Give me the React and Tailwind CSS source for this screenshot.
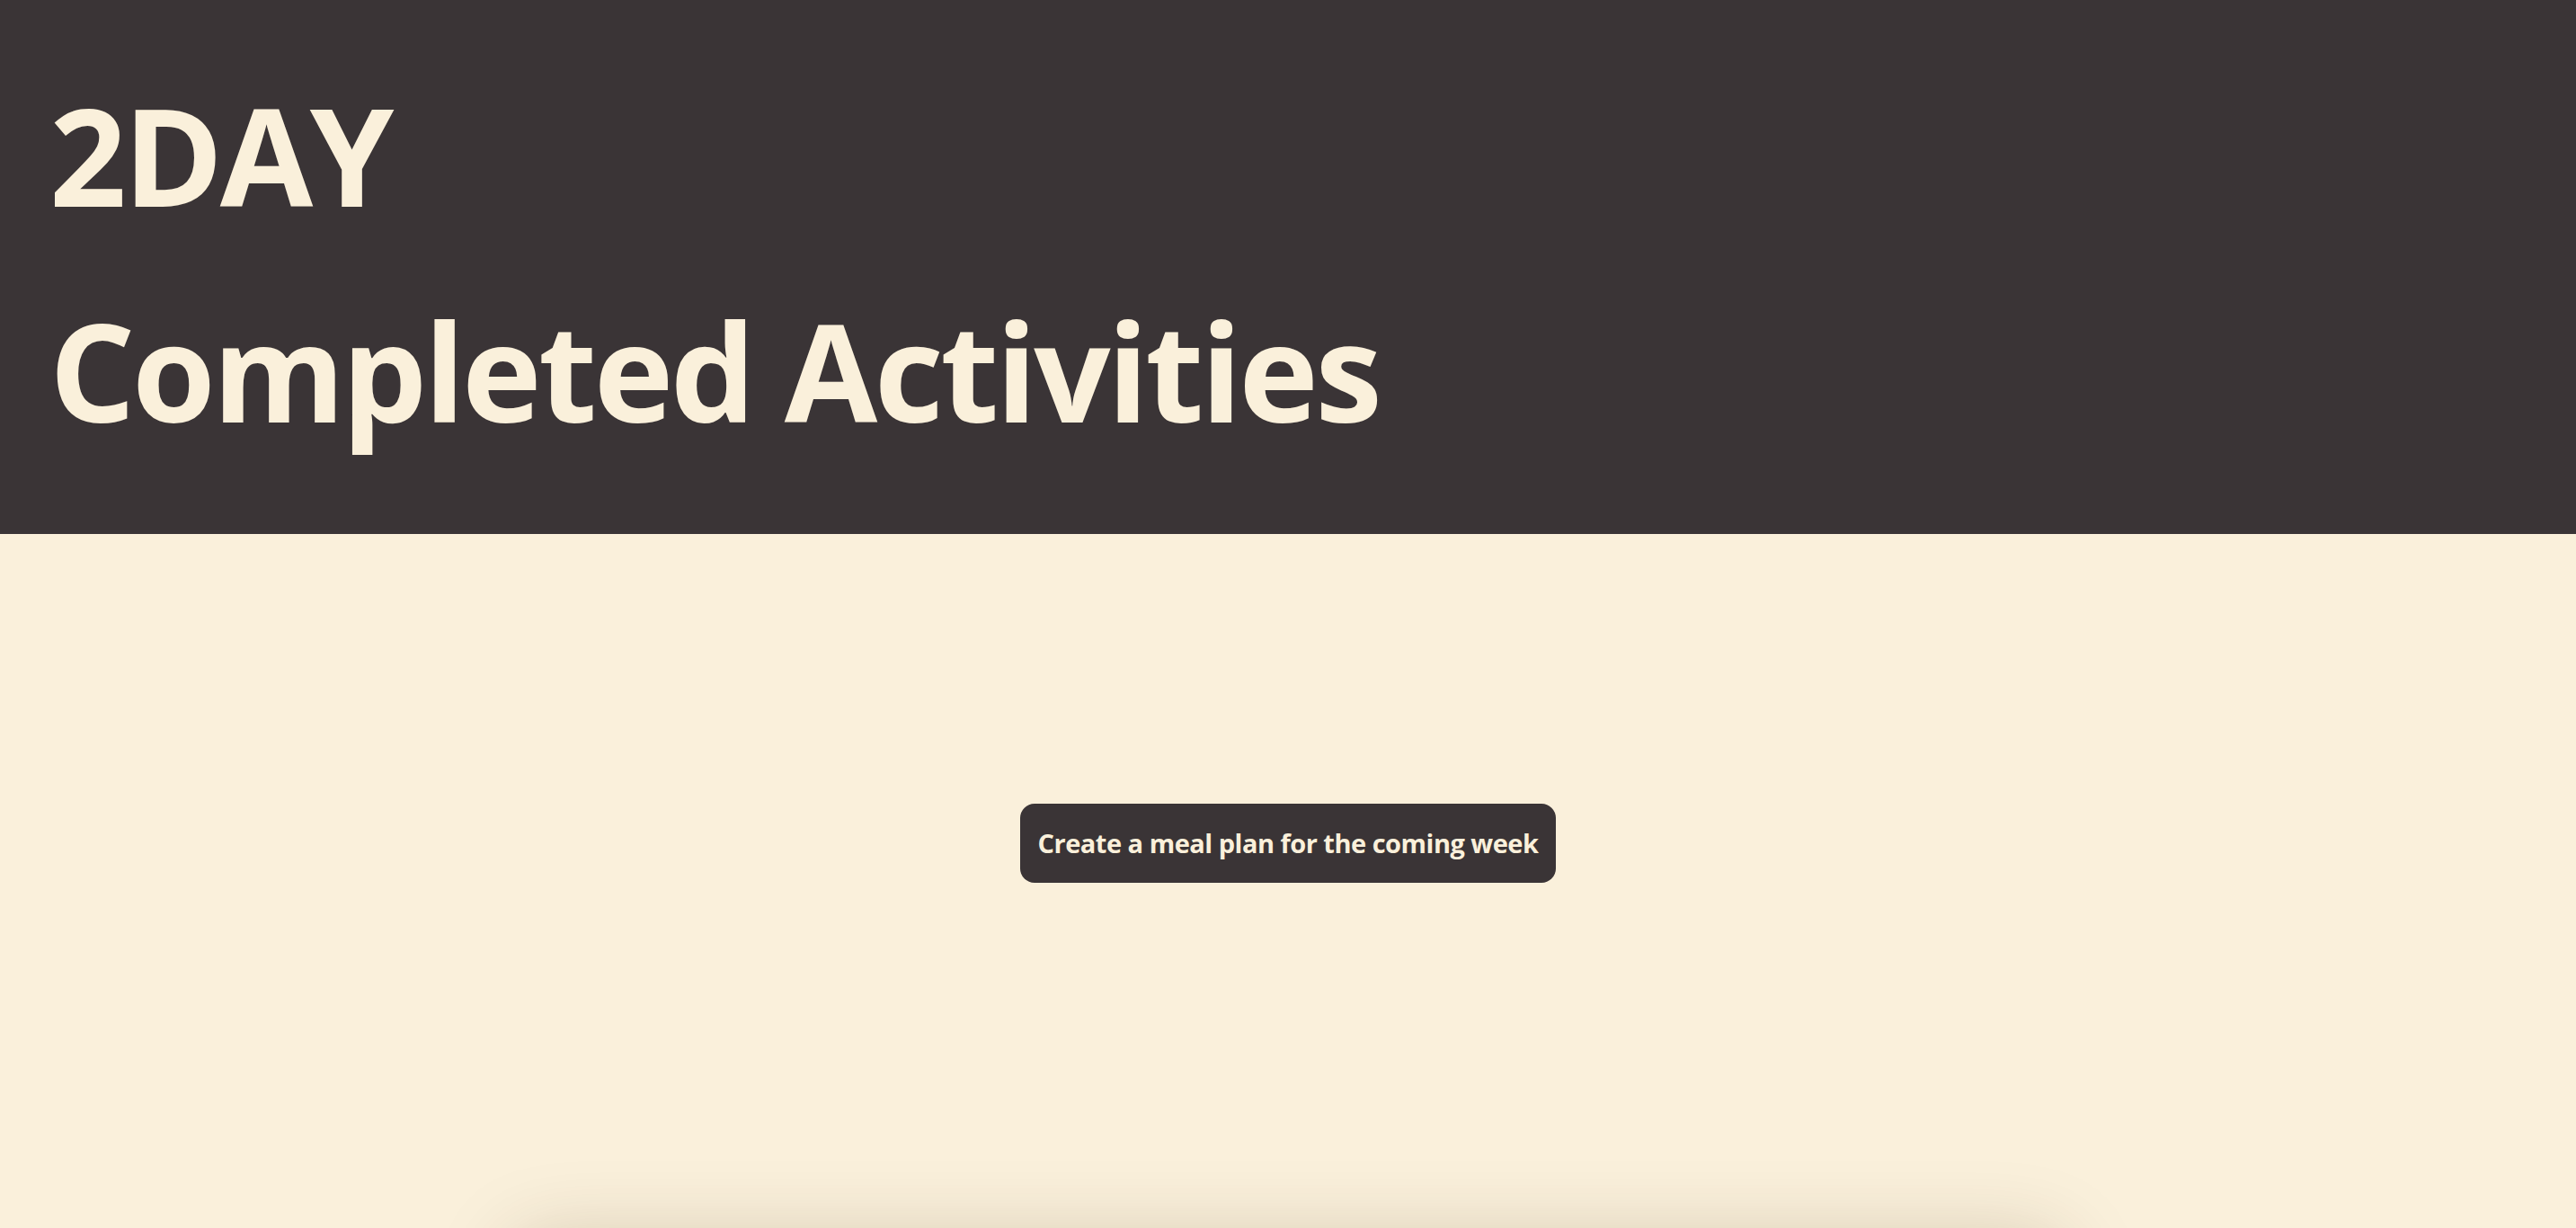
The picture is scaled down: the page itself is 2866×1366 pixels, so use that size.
import React from "react";

export default function App() {
    return (
        <div className="min-h-screen bg-[#faf0db] font-['Open_Sans',sans-serif] text-[#faf0db]">
            {/* header */}
            <header className="bg-[#3a3436] pl-[55px] pt-[52px] pb-[62px]">
                <h1 className="text-[150px] font-bold leading-[240px] tracking-[-3.5px]">2DAY</h1>
                <h2 className="text-[150px] font-bold leading-[240px] tracking-[-3.5px]">Completed Activities</h2>
            </header>

            <main className="flex flex-col items-center pt-[300px]">
                <button className="flex h-[88px] w-[596px] items-center justify-center rounded-2xl bg-[#3a3436] text-[29px] font-bold tracking-[-0.5px] text-[#faf0db]">
                    Create a meal plan for the coming week
                </button>

                {/* activity list card, starts below the fold */}
                <div className="mt-[400px] h-[600px] w-[60%] rounded-3xl bg-[#faf0db] shadow-[0_0_90px_rgba(60,40,0,0.22)]" />
            </main>
        </div>
    );
}
